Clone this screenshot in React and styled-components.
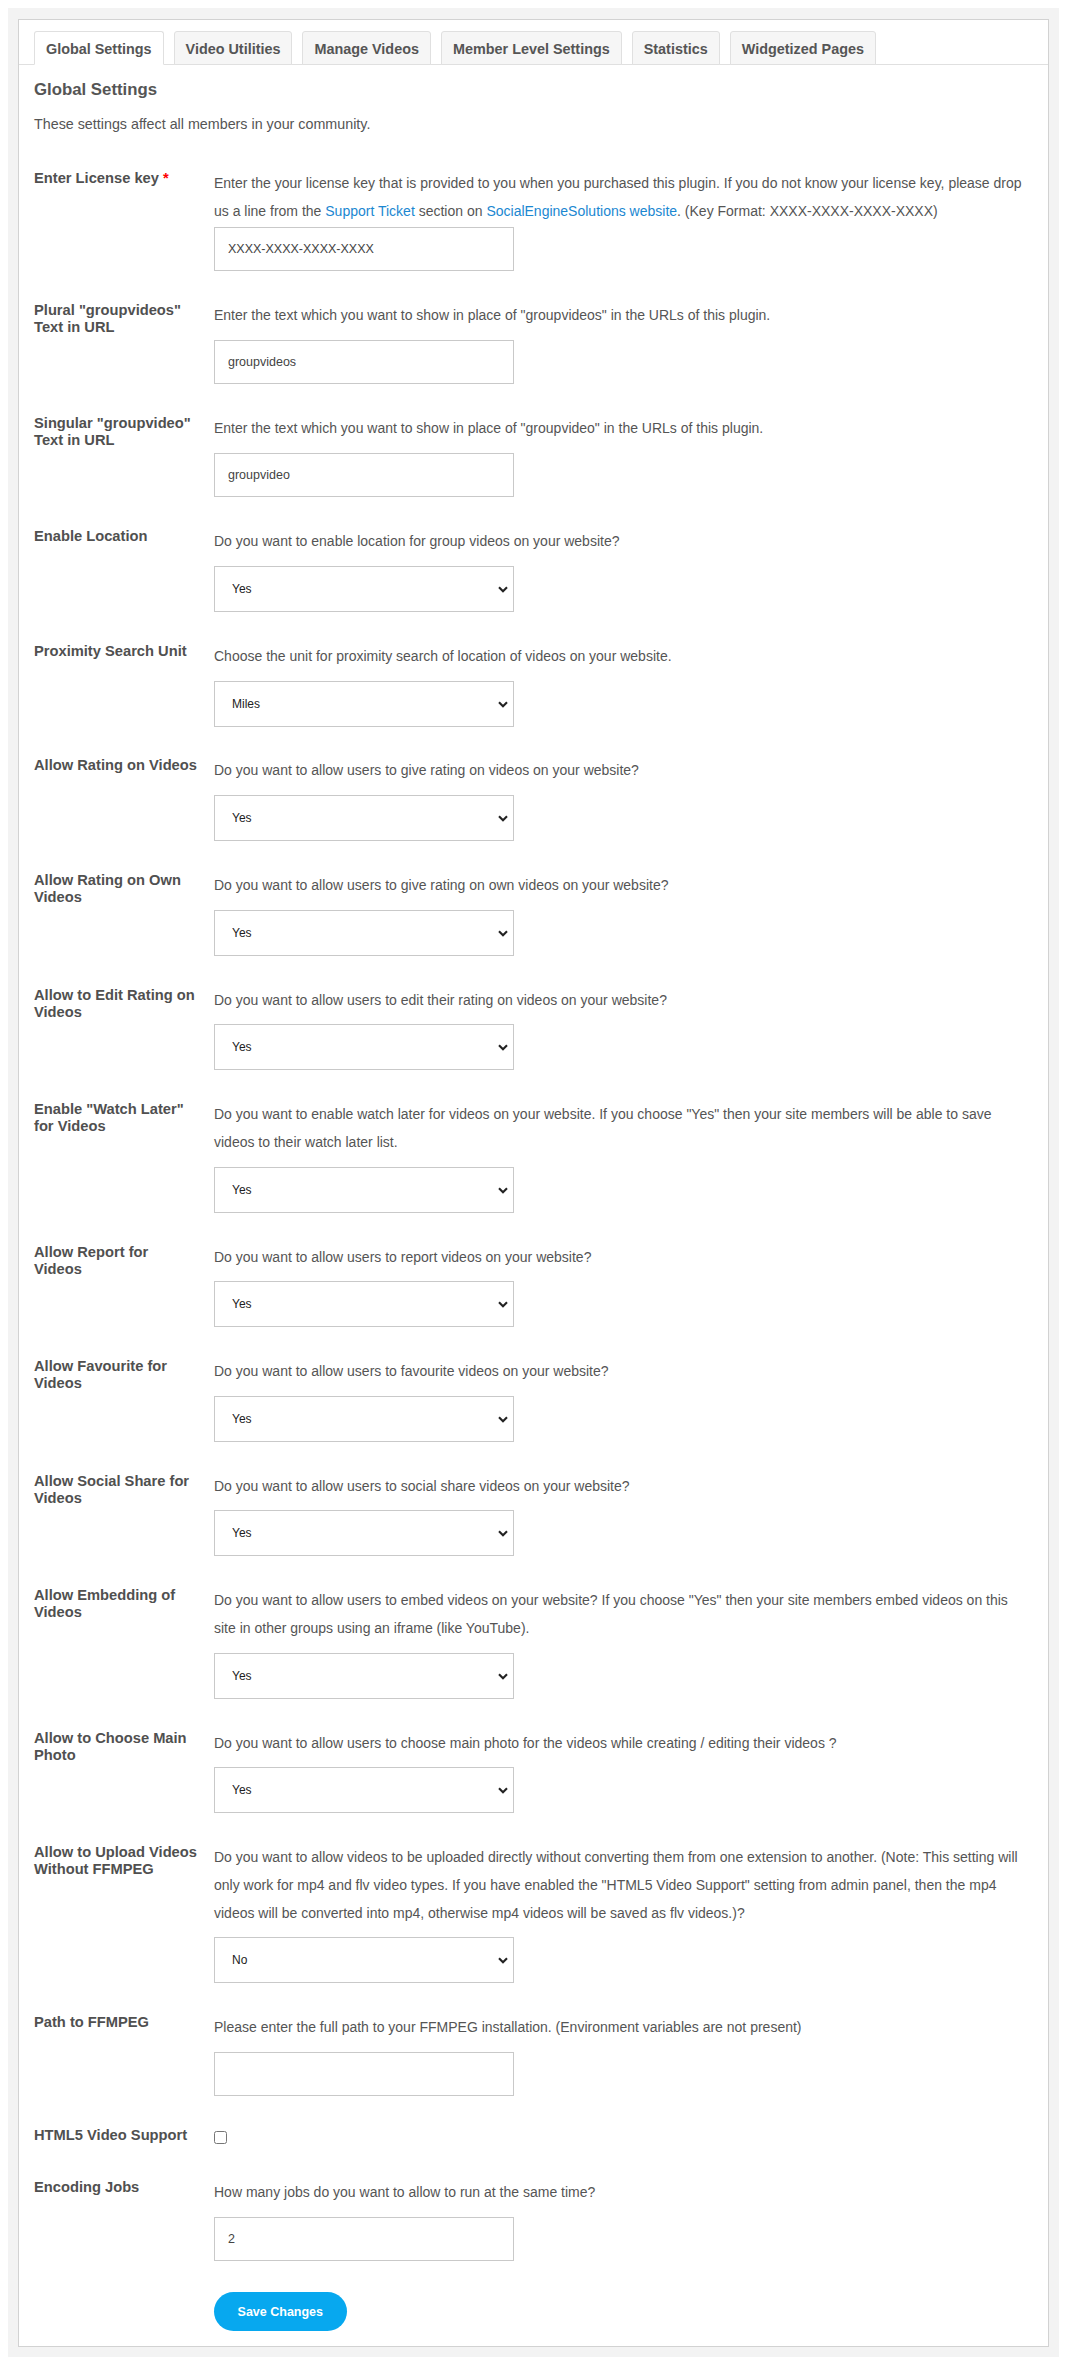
import React from "react";
import styled, { createGlobalStyle } from "styled-components";

const GlobalStyle = createGlobalStyle`
  body {
    margin: 8px;
    background: #fff;
    font-family: "Liberation Sans", Arial, sans-serif;
    color: #555;
  }
`;

const Page = styled.div`
  background: #f3f3f3;
  padding: 11px 10px 10px;
`;

const Panel = styled.div`
  background: #fff;
  border: 1px solid #d2d2d2;
  padding-bottom: 15px;
`;

const TabBar = styled.ul`
  display: flex;
  gap: 10px;
  margin: 0;
  padding: 10.7px 15px 0;
  list-style: none;
  border-bottom: 1px solid #e0e0e0;
`;

const Tab = styled.li`
  box-sizing: border-box;
  height: 34.6px;
  margin-bottom: -1px;
  padding: 2px 11px 0;
  display: flex;
  align-items: center;
  font-size: 14.4px;
  font-weight: bold;
  color: #555;
  background: ${(p) => (p.$active ? "#fff" : "#f6f6f6")};
  border: 1px solid #e0e0e0;
  border-bottom-color: ${(p) => (p.$active ? "#fff" : "#e0e0e0")};
  border-radius: 3px 3px 0 0;
  white-space: nowrap;
`;

const Content = styled.div`
  padding: 15px 15px 0;
`;

const Heading = styled.h2`
  margin: 0;
  font-size: 16.8px;
  line-height: 20px;
  font-weight: bold;
  color: #555;
`;

const Intro = styled.p`
  margin: 14px 0 0;
  font-size: 14.3px;
  line-height: 20px;
  color: #555;
`;

const Form = styled.div`
  margin-top: 36px;
  display: flex;
  flex-direction: column;
  gap: 30.9px;
`;

const Row = styled.div`
  display: grid;
  grid-template-columns: 180px 1fr;
`;

const Label = styled.div`
  font-size: 14.7px;
  line-height: 17px;
  font-weight: bold;
  color: #505050;
  white-space: nowrap;
`;

const Req = styled.span`
  color: #f00;
`;

const Field = styled.div`
  display: flex;
  flex-direction: column;
  align-items: flex-start;
`;

const Desc = styled.div`
  font-size: 14px;
  line-height: 27.7px;
  color: #555;
  white-space: nowrap;
`;

const Link = styled.a`
  color: #1b87d1;
  text-decoration: none;
`;

const TextInput = styled.input`
  box-sizing: border-box;
  width: 300px;
  height: 44.5px;
  margin-top: ${(p) => (p.$tight ? "1px" : "10px")};
  padding: 0 13px;
  border: 1px solid #c9c9c9;
  border-radius: 0;
  font-family: "Liberation Sans", Arial, sans-serif;
  font-size: 12.5px;
  color: #444;
  background: #fff;
  outline: none;
`;

const SelectWrap = styled.div`
  position: relative;
  width: 300px;
  margin-top: 10px;
`;

const Select = styled.select`
  box-sizing: border-box;
  width: 100%;
  height: 46px;
  padding: 0 17px;
  border: 1px solid #c9c9c9;
  border-radius: 0;
  appearance: none;
  background: #fff;
  font-family: "Liberation Sans", Arial, sans-serif;
  font-size: 12px;
  color: #222;
  outline: none;
`;

const Chevron = styled.svg`
  position: absolute;
  right: 6px;
  top: 20px;
  pointer-events: none;
`;

const Check = styled.input`
  width: 13px;
  height: 13px;
  margin: 4px 0;
`;

const SaveButton = styled.button`
  width: 132.6px;
  height: 38.7px;
  border: none;
  border-radius: 20px;
  background: #07a8ef;
  color: #fff;
  font-family: "Liberation Sans", Arial, sans-serif;
  font-size: 12.5px;
  font-weight: bold;
  cursor: pointer;
`;

const tabs = [
  "Global Settings",
  "Video Utilities",
  "Manage Videos",
  "Member Level Settings",
  "Statistics",
  "Widgetized Pages",
];

const rows = [
  {
    label: ["Enter License key"],
    required: true,
    desc: [
      "Enter the your license key that is provided to you when you purchased this plugin. If you do not know your license key, please drop",
      <>
        us a line from the <Link href="#">Support Ticket</Link> section on{" "}
        <Link href="#">SocialEngineSolutions website</Link>. (Key Format: XXXX-XXXX-XXXX-XXXX)
      </>,
    ],
    input: "XXXX-XXXX-XXXX-XXXX",
    tight: true,
  },
  {
    label: ['Plural "groupvideos"', "Text in URL"],
    desc: ['Enter the text which you want to show in place of "groupvideos" in the URLs of this plugin.'],
    input: "groupvideos",
  },
  {
    label: ['Singular "groupvideo"', "Text in URL"],
    desc: ['Enter the text which you want to show in place of "groupvideo" in the URLs of this plugin.'],
    input: "groupvideo",
  },
  {
    label: ["Enable Location"],
    desc: ["Do you want to enable location for group videos on your website?"],
    select: "Yes",
  },
  {
    label: ["Proximity Search Unit"],
    desc: ["Choose the unit for proximity search of location of videos on your website."],
    select: "Miles",
    options: ["Miles", "Kilometers"],
  },
  {
    label: ["Allow Rating on Videos"],
    desc: ["Do you want to allow users to give rating on videos on your website?"],
    select: "Yes",
  },
  {
    label: ["Allow Rating on Own", "Videos"],
    desc: ["Do you want to allow users to give rating on own videos on your website?"],
    select: "Yes",
  },
  {
    label: ["Allow to Edit Rating on", "Videos"],
    desc: ["Do you want to allow users to edit their rating on videos on your website?"],
    select: "Yes",
  },
  {
    label: ['Enable "Watch Later"', "for Videos"],
    desc: [
      'Do you want to enable watch later for videos on your website. If you choose "Yes" then your site members will be able to save',
      "videos to their watch later list.",
    ],
    select: "Yes",
  },
  {
    label: ["Allow Report for", "Videos"],
    desc: ["Do you want to allow users to report videos on your website?"],
    select: "Yes",
  },
  {
    label: ["Allow Favourite for", "Videos"],
    desc: ["Do you want to allow users to favourite videos on your website?"],
    select: "Yes",
  },
  {
    label: ["Allow Social Share for", "Videos"],
    desc: ["Do you want to allow users to social share videos on your website?"],
    select: "Yes",
  },
  {
    label: ["Allow Embedding of", "Videos"],
    desc: [
      'Do you want to allow users to embed videos on your website? If you choose "Yes" then your site members embed videos on this',
      "site in other groups using an iframe (like YouTube).",
    ],
    select: "Yes",
  },
  {
    label: ["Allow to Choose Main", "Photo"],
    desc: ["Do you want to allow users to choose main photo for the videos while creating / editing their videos ?"],
    select: "Yes",
  },
  {
    label: ["Allow to Upload Videos", "Without FFMPEG"],
    desc: [
      "Do you want to allow videos to be uploaded directly without converting them from one extension to another. (Note: This setting will",
      'only work for mp4 and flv video types. If you have enabled the "HTML5 Video Support" setting from admin panel, then the mp4',
      "videos will be converted into mp4, otherwise mp4 videos will be saved as flv videos.)?",
    ],
    select: "No",
  },
  {
    label: ["Path to FFMPEG"],
    desc: ["Please enter the full path to your FFMPEG installation. (Environment variables are not present)"],
    input: "",
  },
];

function Dropdown({ value, options }) {
  const list = options || ["Yes", "No"];
  return (
    <SelectWrap>
      <Select defaultValue={value}>
        {list.map((o) => (
          <option key={o}>{o}</option>
        ))}
      </Select>
      <Chevron width="10" height="7" viewBox="0 0 10 7">
        <polyline points="1,1.2 5,5.2 9,1.2" fill="none" stroke="#222" strokeWidth="2.1" />
      </Chevron>
    </SelectWrap>
  );
}

function SettingRow({ row }) {
  return (
    <Row>
      <Label>
        {row.label.map((l, i) => (
          <React.Fragment key={i}>
            {i > 0 && <br />}
            {l}
          </React.Fragment>
        ))}
        {row.required && (
          <>
            {" "}
            <Req>*</Req>
          </>
        )}
      </Label>
      <Field>
        <Desc>
          {row.desc.map((d, i) => (
            <React.Fragment key={i}>
              {i > 0 && <br />}
              {d}
            </React.Fragment>
          ))}
        </Desc>
        {row.select !== undefined ? (
          <Dropdown value={row.select} options={row.options} />
        ) : (
          <TextInput defaultValue={row.input} $tight={row.tight} />
        )}
      </Field>
    </Row>
  );
}

export default function App() {
  return (
    <>
      <GlobalStyle />
      <Page>
        <Panel>
          <TabBar>
            {tabs.map((t, i) => (
              <Tab key={t} $active={i === 0}>
                {t}
              </Tab>
            ))}
          </TabBar>
          <Content>
            <Heading>Global Settings</Heading>
            <Intro>These settings affect all members in your community.</Intro>
            <Form>
              {rows.map((r, i) => (
                <SettingRow key={i} row={r} />
              ))}
              <Row>
                <Label>HTML5 Video Support</Label>
                <Field>
                  <Check type="checkbox" />
                </Field>
              </Row>
              <Row>
                <Label>Encoding Jobs</Label>
                <Field>
                  <Desc>How many jobs do you want to allow to run at the same time?</Desc>
                  <TextInput defaultValue="2" />
                </Field>
              </Row>
              <Row>
                <div />
                <Field>
                  <SaveButton>Save Changes</SaveButton>
                </Field>
              </Row>
            </Form>
          </Content>
        </Panel>
      </Page>
    </>
  );
}
